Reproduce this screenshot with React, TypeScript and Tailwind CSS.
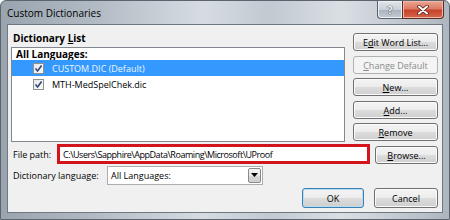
import React from "react";

const btn =
  "flex items-center justify-center rounded-[3px] border border-[#707070] bg-[linear-gradient(180deg,#f4f4f4_0%,#ececec_48%,#dcdcdc_52%,#cfcfcf_100%)] shadow-[inset_0_0_0_1px_#fbfbfb] text-[9px] text-black leading-none";

function U({ children }: { children: React.ReactNode }) {
  return <span className="underline underline-offset-[1px] decoration-[0.5px]">{children}</span>;
}

function Check() {
  return (
    <span className="flex h-[11px] w-[11px] items-center justify-center border border-[#8e8f8f] bg-[linear-gradient(135deg,#e6e6e6,#ffffff)]">
      <svg width="9" height="9" viewBox="0 0 9 9">
        <path d="M1.5 4.5 L3.6 7 L7.6 1.5" fill="none" stroke="#31457a" strokeWidth="1.6" />
      </svg>
    </span>
  );
}

export default function App() {
  return (
    <div className="flex h-[220px] w-[450px] flex-col overflow-hidden rounded-t-[6px] border border-[#5c646d] bg-[linear-gradient(90deg,#9aa4ae_0%,#b3bcc5_22%,#d6dce2_45%,#c1c9d1_60%,#dadfe4_76%,#adb6bf_100%)] font-['Open_Sans','Noto_Sans',sans-serif] text-black">
      {/* title bar */}
      <div className="flex h-[23px] shrink-0 items-start">
        <span className="ml-[6px] mt-[5px] text-[10px] leading-[14px] text-black">Custom Dictionaries</span>
        <div className="ml-auto mr-[5px] flex">
          <div className="flex h-[18px] w-[25px] items-center justify-center rounded-bl-[4px] border border-t-0 border-r-0 border-[#58616a] bg-[linear-gradient(180deg,#e2e6ea_0%,#c9d0d7_50%,#aab4be_55%,#c3ccd4_100%)] shadow-[inset_0_0_0_1px_#eef1f4]">
            <span className="text-[11px] font-bold leading-none text-[#f4f6f8] [text-shadow:0_0_1px_#3c4652,0_0_1px_#3c4652]">?</span>
          </div>
          <div className="flex h-[18px] w-[42px] items-center justify-center rounded-br-[4px] border border-t-0 border-[#5b2c24] bg-[linear-gradient(180deg,#eaa896_0%,#db7a63_45%,#c8432b_55%,#d4664a_100%)] shadow-[inset_0_0_0_1px_#efb9a9]">
            <svg width="12" height="10" viewBox="0 0 12 10">
              <path d="M2 1.5 L10 8.5 M10 1.5 L2 8.5" stroke="#5a1f16" strokeWidth="3.6" strokeLinecap="round" />
              <path d="M2 1.5 L10 8.5 M10 1.5 L2 8.5" stroke="#ffffff" strokeWidth="2" strokeLinecap="round" />
            </svg>
          </div>
        </div>
      </div>

      {/* client */}
      <div className="mx-[6px] mb-[6px] flex flex-1 flex-col border border-[#6f7882] bg-[#f0f0f0] pl-[3px] pr-[4px] pt-[8px] pb-[4px]">
        {/* top section */}
        <div className="flex gap-[8px]">
          <div className="flex flex-1 flex-col">
            <div className="h-[14px] pl-[2px] text-[10px] font-bold leading-[11px]">
              Dictionary <U>L</U>ist
            </div>
            <div className="flex h-[95px] flex-col border border-[#828790] bg-white">
              <div className="h-[12px] pl-[4px] text-[10px] font-bold leading-[12px]">All Languages:</div>
              <div className="flex h-[16px] items-center bg-[#3399ff] pl-[21px]">
                <Check />
                <span className="ml-[8px] text-[9px] leading-none text-[#eef5ff]">CUSTOM.DIC (Default)</span>
              </div>
              <div className="flex h-[16px] items-center pl-[21px]">
                <Check />
                <span className="ml-[8px] text-[9px] leading-none">MTH-MedSpelChek.dic</span>
              </div>
            </div>
          </div>
          <div className="flex w-[85px] flex-col">
            <div className={`${btn} h-[18px]`}>
              E<U>d</U>it Word List...
            </div>
            <div className="mt-[5px] flex h-[18px] items-center justify-center rounded-[3px] border border-[#adb2b5] bg-[#f4f4f4] text-[9px] leading-none text-[#8a8a8a]">
              <U>C</U>hange Default
            </div>
            <div className={`${btn} mt-[4px] h-[18px]`}>
              <U>N</U>ew...
            </div>
            <div className={`${btn} mt-[5px] h-[18px]`}>
              <U>A</U>dd...
            </div>
            <div className={`${btn} mt-[4px] h-[18px]`}>
              <U>R</U>emove
            </div>
          </div>
        </div>

        {/* file path */}
        <div className="mt-[2px] flex h-[20px] items-center">
          <span className="w-[46px] pl-[2px] text-[9px] leading-none">File path:</span>
          <div className="flex h-[20px] w-[313px] items-center border-[3px] border-[#d2141c] bg-white pl-[3px]">
            <span className="text-[9px] leading-none tracking-[-0.45px]">C:\Users\Sapphire\AppData\Roaming\Microsoft\UProof</span>
          </div>
          <div className={`${btn} ml-auto mt-[2px] h-[18px] w-[63px]`}>
            <U>B</U>rowse...
          </div>
        </div>

        {/* language */}
        <div className="mt-[1px] flex h-[20px] items-center">
          <span className="w-[96px] pl-[2px] text-[9px] leading-none">Dictionary language:</span>
          <div className="flex h-[19px] w-[156px] items-center border border-[#abadb3] bg-white pl-[3px] pr-[1px]">
            <span className="flex-1 text-[9px] leading-none">All Languages:</span>
            <div className="flex h-[15px] w-[13px] items-center justify-center rounded-[2px] border border-[#8a8a8a] bg-[linear-gradient(180deg,#f4f4f4_0%,#e6e6e6_50%,#d6d6d6_55%,#cfcfcf_100%)]">
              <svg width="7" height="4" viewBox="0 0 7 4">
                <path d="M0 0 L7 0 L3.5 4 Z" fill="#000" />
              </svg>
            </div>
          </div>
        </div>

        {/* ok/cancel */}
        <div className="mt-[3px] flex h-[20px] justify-end gap-[10px]">
          <div className="flex h-[20px] w-[62px] items-center justify-center rounded-[3px] border border-[#3c7fb1] bg-[linear-gradient(180deg,#f4f4f4_0%,#ececec_48%,#dcdcdc_52%,#cfcfcf_100%)] text-[9px] leading-none shadow-[inset_0_0_0_1px_#b4def5]">
            OK
          </div>
          <div className={`${btn} h-[20px] w-[64px]`}>Cancel</div>
        </div>
      </div>
    </div>
  );
}
